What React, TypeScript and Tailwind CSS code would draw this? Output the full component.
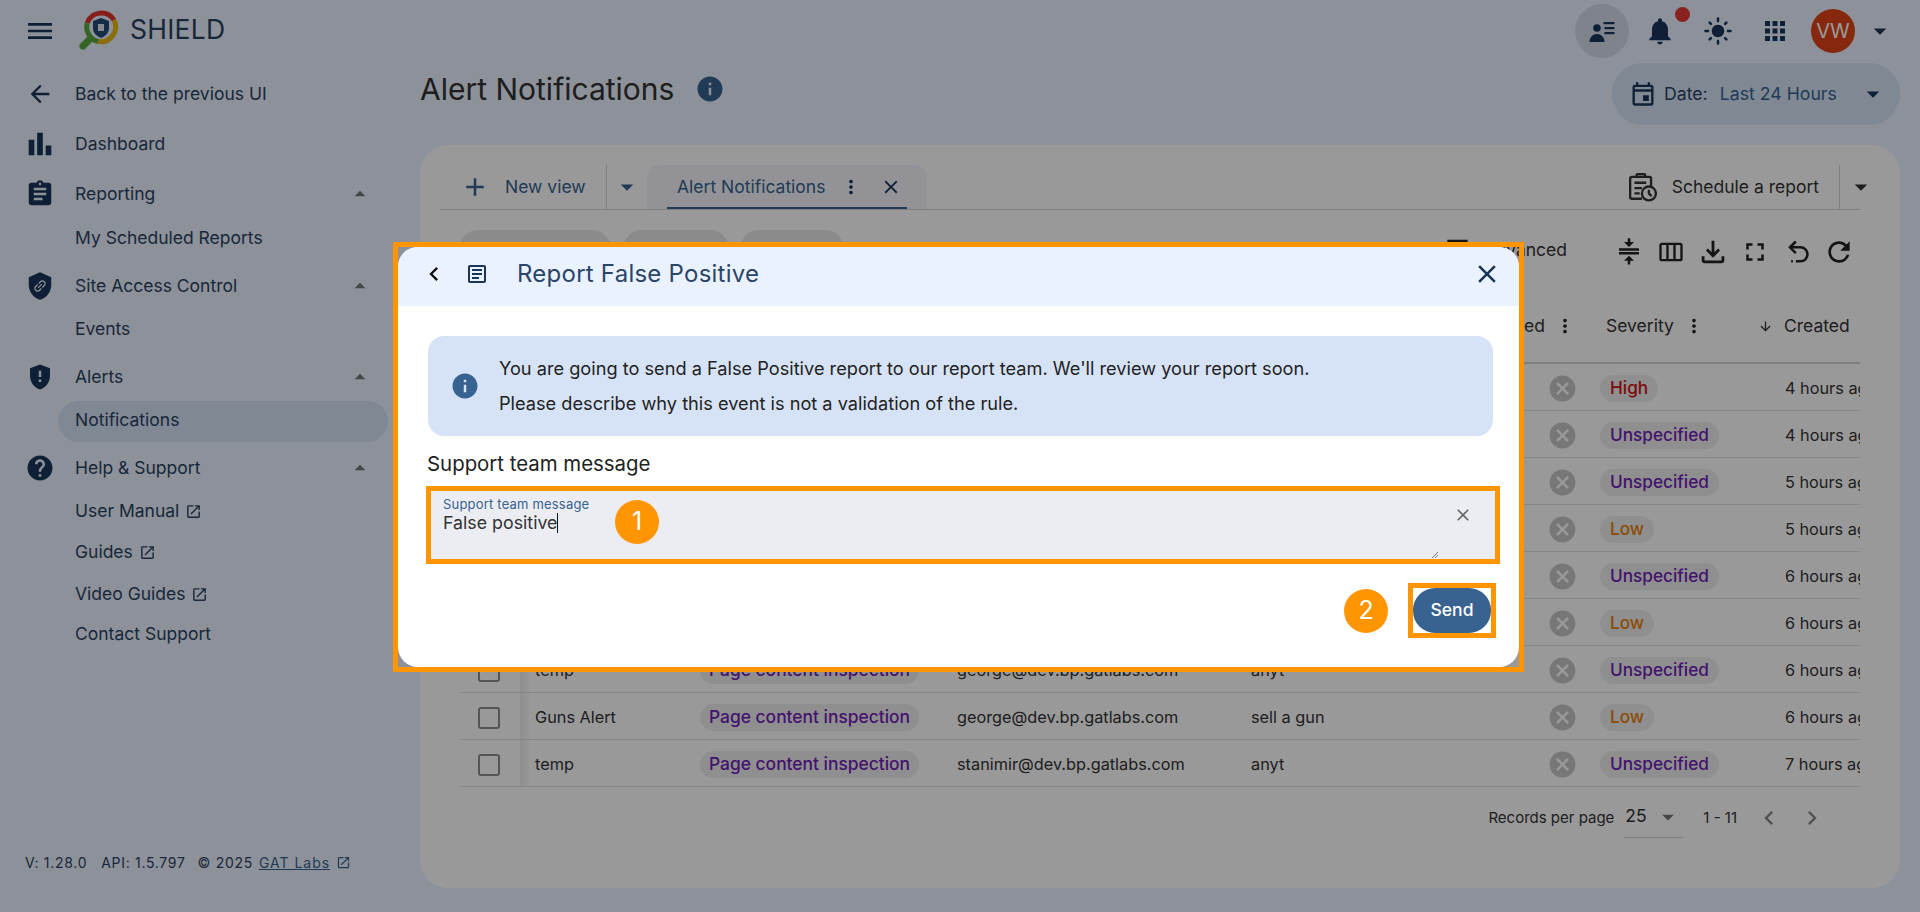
import React from "react";
import {
  MdMenu, MdArrowBack, MdBarChart, MdAssignment, MdShield, MdLink, MdGppMaybe, MdHelp, MdOpenInNew,
  MdArrowDropUp, MdArrowDropDown, MdNotifications, MdLightMode, MdApps, MdOutlineEvent, MdAdd, MdMoreVert,
  MdClose, MdCompress, MdOutlineViewWeek, MdOutlineFileDownload, MdFullscreen, MdRefresh, MdOutlineArticle,
  MdChevronLeft, MdChevronRight, MdInfo, MdCancel, MdArrowDownward, MdFilterList,
} from "react-icons/md";

const Logo = () => (
  <svg width="44" height="42" viewBox="0 0 44 42" fill="none">
    <path d="M5 36 L12 29" stroke="#58a83c" strokeWidth="7" strokeLinecap="round" />
    <path d="M9.2 13 A15 15 0 0 1 36 10" stroke="#e0342c" strokeWidth="5" />
    <path d="M36 10 A15 15 0 0 1 20 31.5" stroke="#e8b60e" strokeWidth="5" />
    <path d="M20 31.5 A15 15 0 0 1 9.2 13" stroke="#58a83c" strokeWidth="5" />
    <path d="M23 8 L31 11 V18 C31 23 27.5 26 23 28 C18.5 26 15 23 15 18 V11 Z" fill="#234a73" />
    <rect x="20" y="14" width="6" height="7" fill="#dfe7f3" />
  </svg>
);

const PersonList = () => (
  <svg width="26" height="21" viewBox="0 0 25 21" fill="#19365a">
    <circle cx="7.5" cy="7" r="3.8" />
    <path d="M0 21 C0 16 3.5 13 7.5 13 S15 16 15 21 Z" />
    <rect x="14" y="1" width="11" height="2.2" />
    <rect x="15" y="6" width="10" height="2.2" />
    <rect x="15" y="11" width="10" height="2.2" />
  </svg>
);

const ScheduleIcon = () => (
  <svg width="28" height="30" viewBox="0 0 26 28" fill="none" stroke="#333" strokeWidth="2.2">
    <path d="M12 25 H2.5 A1.5 1.5 0 0 1 1 23.5 V6 A1.5 1.5 0 0 1 2.5 4.5 H19 A1.5 1.5 0 0 1 20.5 6 V13" />
    <path d="M7 4.5 V3 A1 1 0 0 1 8 2 H14 A1 1 0 0 1 15 3 V4.5" />
    <path d="M5 10 H16 M5 15 H12 M5 20 H10" />
    <circle cx="18.5" cy="20" r="6.5" fill="#fff" />
    <path d="M18.5 16.5 V20 L21 22.5" />
  </svg>
);

const UndoIcon = () => (
  <svg width="28" height="28" viewBox="0 0 24 24" fill="none" stroke="#222" strokeWidth="2.2">
    <path d="M11 3 L6 8 L11 13" />
    <path d="M6 8 H15 A6 6 0 0 1 15 20 H11" />
    <path d="M7 20 H8.5" />
  </svg>
);

const Caret = ({ cls = "" }: { cls?: string }) => <MdArrowDropDown className={"text-[30px] " + cls} />;

const linkCls = "flex items-center gap-[6px]";

function Sidebar() {
  const head = (label: string, icon: React.ReactNode, h: string, arrow = true) => (
    <div className={"flex items-center " + h}>
      <span className="w-[75px] flex items-center justify-center pl-[5px] text-[#19365a]">{icon}</span>
      <span className="flex-1">{label}</span>
      {arrow && <MdArrowDropUp className="text-[26px] text-[#777] mr-[47px]" />}
    </div>
  );
  return (
    <aside className="w-[420px] shrink-0 flex flex-col text-[17.5px] text-[#2b4261]">
      <nav className="pt-[7px] flex flex-col">
        {head("Back to the previous UI", <MdArrowBack className="text-[28px]" />, "h-[50px]", false)}
        {head("Dashboard", <MdBarChart className="text-[34px]" />, "h-[50px]", false)}
        {head("Reporting", <MdAssignment className="text-[30px]" />, "h-[50px]")}
        <div className="h-[38px] flex items-center pl-[75px]">My Scheduled Reports</div>
        {head(
          "Site Access Control",
          <span className="relative flex">
            <MdShield className="text-[30px]" />
            <MdLink className="absolute left-[7px] top-[7px] text-[16px] -rotate-45 text-[#ebf2ff]" />
          </span>,
          "h-[58px]"
        )}
        <div className="h-[28px] flex items-center pl-[75px]">Events</div>
        {head("Alerts", <MdGppMaybe className="text-[30px]" />, "h-[48px] mt-[10px]")}
        <div className="h-[41px] ml-[58px] mr-[32px] rounded-full bg-[#d6e3f7] flex items-center pl-[17px] pb-[2px]">Notifications</div>
        {head("Help & Support", <MdHelp className="text-[30px]" />, "h-[48px] mt-[2px]")}
        <div className="h-[38px] pl-[75px] flex items-center"><span className={linkCls}>User Manual <MdOpenInNew className="text-[17px]" /></span></div>
        <div className="h-[40px] mt-[2px] pl-[75px] flex items-center"><span className={linkCls}>Guides <MdOpenInNew className="text-[17px]" /></span></div>
        <div className="h-[40px] mt-[2px] pl-[75px] flex items-center"><span className={linkCls}>Video Guides <MdOpenInNew className="text-[17px]" /></span></div>
        <div className="h-[40px] pl-[75px] flex items-center">Contact Support</div>
      </nav>
      <div className="mt-auto mb-[40px] pl-[25px] flex items-center text-[14px] tracking-[0.05em] h-[20px] whitespace-nowrap">
        <span>V: 1.28.0</span>
        <span className="ml-[14px]">API: 1.5.797</span>
        <span className="ml-[12px]">© 2025</span>
        <span className="ml-[6px] underline text-[#386290] tracking-[0.07em]">GAT Labs</span>
        <MdOpenInNew className="ml-[6px] text-[15px] text-[#386290]" />
      </div>
    </aside>
  );
}

function TopBar() {
  return (
    <header className="h-[62px] shrink-0 flex items-center justify-between pr-[15px]">
      <div className="flex items-center">
        <div className="w-[80px] flex justify-center text-[#19365a]"><MdMenu className="text-[32px]" /></div>
        <div className="-ml-[2px]"><Logo /></div>
        <span className="ml-[8px] -mt-[3px] text-[26.5px] tracking-[0.01em] text-[#2b4261]">SHIELD</span>
      </div>
      <div className="flex items-center text-[#19365a]">
        <div className="w-[54px] h-[54px] rounded-full bg-[#d2dae9] flex items-center justify-center"><PersonList /></div>
        <div className="relative w-[58px] ml-[2px] flex justify-center">
          <MdNotifications className="text-[32px]" />
          <span className="absolute left-[44px] -top-[8px] w-[15px] h-[15px] rounded-full bg-[#e53935]" />
        </div>
        <div className="w-[58px] flex justify-center"><MdLightMode className="text-[30px]" /></div>
        <div className="w-[56px] flex justify-center"><MdApps className="text-[30px]" /></div>
        <div className="ml-[8px] w-[44px] h-[44px] rounded-full bg-[#de4417] text-white text-[20px] flex items-center justify-center">VW</div>
        <div className="w-[50px] flex justify-center"><Caret /></div>
      </div>
    </header>
  );
}

const sev: Record<string, string> = {
  High: "text-[#d01212]",
  Unspecified: "text-[#7021b8]",
  Low: "text-[#e87f0a]",
};

const rows: [string, string, string, string, string][] = [
  ["Guns Alert", "george@dev.bp.gatlabs.com", "sell a gun", "High", "4 hours ago"],
  ["temp", "george@dev.bp.gatlabs.com", "anyt", "Unspecified", "4 hours ago"],
  ["temp", "stanimir@dev.bp.gatlabs.com", "anyt", "Unspecified", "5 hours ago"],
  ["Guns Alert", "george@dev.bp.gatlabs.com", "sell a gun", "Low", "5 hours ago"],
  ["temp", "george@dev.bp.gatlabs.com", "anyt", "Unspecified", "6 hours ago"],
  ["Guns Alert", "george@dev.bp.gatlabs.com", "sell a gun", "Low", "6 hours ago"],
  ["temp", "george@dev.bp.gatlabs.com", "anyt", "Unspecified", "6 hours ago"],
  ["Guns Alert", "george@dev.bp.gatlabs.com", "sell a gun", "Low", "6 hours ago"],
  ["temp", "stanimir@dev.bp.gatlabs.com", "anyt", "Unspecified", "7 hours ago"],
];

function Table() {
  return (
    <div className="ml-[20px] text-[16.3px] text-[#333]">
      <div className="h-[74px] flex items-center border-b-2 border-[#d4d4d4] text-[17.5px] whitespace-nowrap">
        <div className="w-[60px]" />
        <div className="w-[9px]" />
        <div className="w-[171px] pl-[6px]">Name</div>
        <div className="w-[257px]">Type</div>
        <div className="w-[294px]">User</div>
        <div className="w-[349px] flex justify-end items-center pr-[24px]">
          <span>Resolved</span>
          <MdMoreVert className="ml-[9px] text-[22px] text-[#222]" />
        </div>
        <div className="w-[185px] pl-[6px] flex items-center">
          <span>Severity</span>
          <MdMoreVert className="ml-[9px] text-[22px] text-[#222]" />
          <MdArrowDownward className="ml-[53px] text-[15px] text-[#333]" />
        </div>
        <div className="w-[75px] -ml-[1px]">Created</div>
      </div>
      {rows.map((r, i) => (
        <div key={i} className="h-[47px] flex items-center border-b border-[#e0e0e0] whitespace-nowrap">
          <div className="w-[60px] flex justify-center pr-[2px] pt-[3px]">
            <span className="w-[22px] h-[22px] rounded-[3px] border-2 border-[#8c8c8c]" />
          </div>
          <div className="w-[9px] h-full bg-gradient-to-r from-[#eeeeee] to-[#fbfbfb]" />
          <div className="w-[171px] pl-[6px] pt-[3px]">{r[0]}</div>
          <div className="w-[257px] pt-[3px]">
            <span className="inline-block h-[27px] leading-[25px] px-[9px] rounded-full bg-[#eeeeee] text-[#7021b8] font-medium text-[17.4px]">Page content inspection</span>
          </div>
          <div className="w-[294px] pt-[3px]">{r[1]}</div>
          <div className="w-[298px] pt-[3px]">{r[2]}</div>
          <div className="w-[51px] pt-[3px]"><MdCancel className="text-[31px] -ml-[2px] text-[#c6c6c6]" /></div>
          <div className="w-[185px] pt-[3px]">
            <span className={"inline-block h-[27px] leading-[25px] px-[10px] rounded-full bg-[#eeeeee] font-medium text-[17.2px] " + sev[r[3]]}>{r[3]}</span>
          </div>
          <div className="w-[75px] overflow-hidden pt-[3px]">{r[4]}</div>
        </div>
      ))}
    </div>
  );
}

function Card() {
  return (
    <section className="h-[743px] rounded-[28px] bg-white pt-[20px] pl-[20px] pr-[40px] text-[#333]">
      <div className="h-[45px] flex items-stretch border-b border-[#d4d4d4] text-[17.5px]">
        <div className="flex items-center pl-[20px] w-[166px] text-[#386290]">
          <MdAdd className="text-[30px]" />
          <span className="ml-[15px]">New view</span>
        </div>
        <div className="w-[41px] border-l border-[#d4d4d4] flex items-center justify-center text-[#386290]"><Caret /></div>
        <div className="w-[280px] rounded-t-[12px] bg-[#f5f6fc] relative flex items-center pl-[30px] text-[#386290]">
          <span>Alert Notifications</span>
          <MdMoreVert className="ml-[15px] text-[22px] text-[#19365a]" />
          <MdClose className="ml-[18px] text-[22px] text-[#19365a]" />
          <span className="absolute left-[20px] right-[20px] bottom-0 h-[2px] bg-[#386290]" />
        </div>
        <div className="flex-1 flex items-center justify-end">
          <ScheduleIcon />
          <span className="ml-[15px]">Schedule a report</span>
          <div className="ml-[20px] w-[21px] h-full border-l border-[#d4d4d4] flex items-center"><Caret cls="shrink-0 ml-[6px] text-[#333]" /></div>
        </div>
      </div>
      <div className="h-[80px] flex items-center justify-between">
        <div className="flex pl-[19px] self-start mt-[20px]">
          <div className="w-[152px] h-[38px] rounded-full bg-[#e8e8e8]" />
          <div className="ml-[12px] w-[106px] h-[38px] rounded-full bg-[#e8e8e8]" />
          <div className="ml-[11px] w-[104px] h-[38px] rounded-full bg-[#e8e8e8]" />
        </div>
        <div className="flex items-center text-[#222]">
          <MdFilterList className="text-[27px] -mt-[7px]" />
          <span className="ml-[12px] mr-[41px] text-[17.5px] text-[#333]">Advanced</span>
          <div className="flex items-center mt-[3px]">
            <div className="w-[42px] flex justify-center"><MdCompress className="text-[30px]" /></div>
            <div className="w-[42px] flex justify-center"><MdOutlineViewWeek className="text-[28px]" /></div>
            <div className="w-[42px] flex justify-center"><MdOutlineFileDownload className="text-[34px]" /></div>
            <div className="w-[42px] flex justify-center"><MdFullscreen className="text-[30px]" /></div>
            <div className="w-[42px] flex justify-center"><UndoIcon /></div>
            <div className="w-[42px] flex justify-center"><MdRefresh className="text-[32px]" /></div>
          </div>
        </div>
      </div>
      <Table />
      <div className="h-[60px] flex items-start justify-end pt-[20px] pr-[34px]">
        <span className="mr-[10px] text-[15px]">Records per page</span>
        <div className="relative w-[59px] h-[35px] border-b border-[#d4d4d4] flex items-start -mt-[4px] mr-[20px]">
          <span className="ml-[1px] text-[17.5px]">25</span>
          <MdArrowDropDown className="absolute right-[1px] top-[0px] text-[28px] text-[#777]" />
        </div>
        <span className="text-[15px]">1 - 11</span>
        <MdChevronLeft className="ml-[18px] text-[28px] text-[#888] -mt-[3px]" />
        <MdChevronRight className="ml-[15px] text-[28px] text-[#888] -mt-[3px]" />
      </div>
    </section>
  );
}

const Badge = ({ n }: { n: string }) => (
  <span className="w-[44px] h-[44px] rounded-full bg-[#ff9500] text-white text-[25px] flex items-center justify-center">{n}</span>
);

function Dialog() {
  return (
    <div className="absolute left-[393px] top-[242px] w-[1131px] h-[430px] border-[5px] border-[#ff9500]">
      <div className="h-full rounded-[20px] bg-white overflow-hidden">
        <div className="h-[59px] pb-[5px] bg-[#ebf2ff] flex items-center">
          <MdChevronLeft className="ml-[22px] text-[28px] text-[#111]" />
          <MdOutlineArticle className="ml-[17px] text-[24px] text-[#19365a]" />
          <span className="ml-[28px] text-[24px] tracking-[0.01em] text-[#2a4568]">Report False Positive</span>
          <MdClose className="ml-auto mr-[17px] text-[30px] text-[#19365a]" />
        </div>
        <div className="pl-[30px] pr-[26px] pt-[30px]">
          <div className="h-[100px] rounded-[16px] bg-[#d6e3f7] flex items-center pl-[22px] text-[18.2px] text-[#222]">
            <MdInfo className="text-[30px] text-[#386290] shrink-0" />
            <div className="ml-[19px] -mt-[2px] flex flex-col gap-[11px]">
              <span className="leading-[24px]">You are going to send a False Positive report to our report team. We'll review your report soon.</span>
              <span className="leading-[24px]">Please describe why this event is not a validation of the rule.</span>
            </div>
          </div>
          <div className="mt-[16px] -ml-[1px] h-[24px] leading-[24px] text-[20.4px] text-[#222]">Support team message</div>
          <div className="relative mt-[10px] -ml-[2px] -mr-[7px] h-[78px] border-[5px] border-[#ff9500]">
            <div className="h-full bg-[#ebedf2] rounded-t-[3px] pl-[12px] pt-[6px] flex justify-between">
              <div>
                <div className="text-[13px] leading-[14px] tracking-[0.015em] text-[#386290]">Support team message</div>
                <div className="flex items-center text-[17.8px] leading-[24px] text-[#333]">
                  False positive<span className="inline-block w-[1px] h-[20px] bg-[#111]" />
                </div>
              </div>
              <MdClose className="mr-[22px] mt-[8px] text-[20px] text-[#666]" />
            </div>
            <div className="absolute left-[184px] top-[9px]"><Badge n="1" /></div>
            <svg className="absolute right-[56px] bottom-[0px]" width="8" height="8" viewBox="0 0 8 8" stroke="#777" strokeWidth="1" fill="none">
              <path d="M1 7 L7 1 M4 7 L7 4" />
            </svg>
          </div>
          <div className="mt-[19px] -mr-[3px] flex items-center justify-end gap-[20px]">
            <Badge n="2" />
            <div className="w-[88px] h-[55px] border-[5px] border-[#ff9500]">
              <button className="w-full h-full rounded-[22px] bg-[#386290] text-white text-[17.5px] font-medium">Send</button>
            </div>
          </div>
        </div>
      </div>
    </div>
  );
}

export default function App() {
  return (
    <div className="relative w-[1920px] h-[912px] overflow-hidden bg-[#ebf2ff] font-['Inter',sans-serif] flex flex-col">
      <TopBar />
      <div className="flex-1 flex min-h-0">
        <Sidebar />
        <main className="flex-1 pr-[20px] flex flex-col">
          <div className="h-[83px] shrink-0 flex items-start justify-between">
            <div className="flex items-center mt-[8px] h-[38px]">
              <h1 className="text-[30px] text-[#333] leading-[38px]">Alert Notifications</h1>
              <MdInfo className="ml-[21px] text-[30px] text-[#386290]" />
            </div>
            <div className="mt-[1px] w-[288px] h-[62px] rounded-full bg-[#d6e3f7] flex items-center pl-[16px] text-[17.7px]">
              <MdOutlineEvent className="text-[28px] text-[#19365a] ml-[1px]" />
              <span className="ml-[7px] text-[#2b4261]">Date:</span>
              <span className="ml-[12px] text-[#386290]">Last 24 Hours</span>
              <Caret cls="ml-[21px] text-[#19365a]" />
            </div>
          </div>
          <Card />
        </main>
      </div>
      <div className="absolute inset-0 bg-black/40" />
      <Dialog />
    </div>
  );
}
